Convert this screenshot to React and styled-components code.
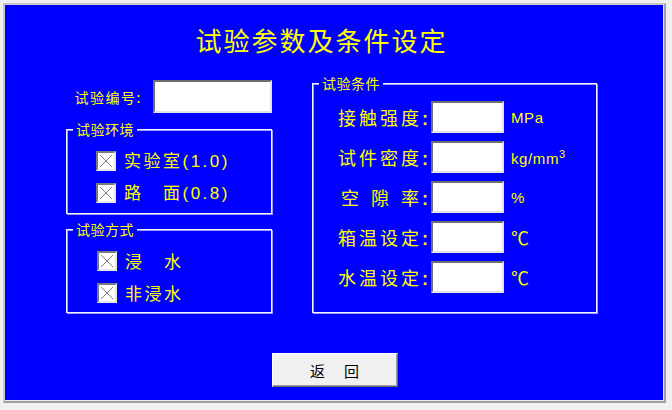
import styled, { createGlobalStyle } from "styled-components";

const GlobalStyle = createGlobalStyle`
  html, body {
    margin: 0;
    padding: 0;
    background: #f0f0f0;
  }
  body {
    font-family: "Noto Sans CJK SC", "Liberation Sans", sans-serif;
  }
`;

const Frame = styled.div`
  box-sizing: border-box;
  margin: 3px 0 0 3px;
  width: 663px;
  height: 400px;
  background: #0000ff;
  border-top: 2px solid #c8c8c8;
  border-left: 2px solid #c8c8c8;
  border-right: 2px solid #a0a0a0;
  border-bottom: 2px solid #a0a0a0;
  box-shadow: inset -1px -1px 0 #e8e8e8;
  display: flex;
  flex-direction: column;
`;

const Title = styled.h1`
  margin: 20px 0 0 0;
  height: 30px;
  line-height: 30px;
  text-align: center;
  font-size: 26px;
  font-weight: 400;
  letter-spacing: 2px;
  color: #ffff00;
  padding-right: 26px;
`;

const Body = styled.div`
  display: flex;
  gap: 40px;
  margin-top: 25px;
  padding-left: 61px;
`;

const LeftCol = styled.div`
  width: 206px;
  display: flex;
  flex-direction: column;
`;

const IdRow = styled.div`
  height: 33px;
  display: flex;
  align-items: center;
  justify-content: flex-end;
  gap: 11px;
`;

const SmallLabel = styled.span`
  font-size: 14px;
  color: #ffff00;
  letter-spacing: 1.5px;
`;

const Field = styled.div`
  box-sizing: border-box;
  width: ${(p) => p.$w}px;
  height: ${(p) => p.$h}px;
  background: #ffffff;
  border-top: 2px solid #6e6e6e;
  border-left: 2px solid #6e6e6e;
  border-right: 2px solid #e2e2e2;
  border-bottom: 2px solid #e2e2e2;
`;

const Group = styled.div`
  position: relative;
  box-sizing: border-box;
  width: ${(p) => p.$w}px;
  height: ${(p) => p.$h}px;
  margin-top: ${(p) => p.$mt}px;
  border: 1px solid #f4f4ff;
  box-shadow: inset 1px 1px 0 #9a9aff, 1px 1px 0 #9a9aff;
  padding: ${(p) => p.$pad};
  display: flex;
  flex-direction: column;
  gap: ${(p) => p.$gap}px;
`;

const Legend = styled.span`
  position: absolute;
  top: -10px;
  left: 6px;
  padding: 0 3px;
  background: #0000ff;
  font-size: 14px;
  line-height: 18px;
  letter-spacing: 0.5px;
  color: #ffff00;
`;

const CheckRow = styled.label`
  display: flex;
  align-items: center;
  gap: 8px;
  height: 20px;
`;

const Box = styled.span`
  box-sizing: border-box;
  width: 20px;
  height: 20px;
  background: #ffffff;
  border-top: 2px solid #7a7a7a;
  border-left: 2px solid #7a7a7a;
  border-right: 2px solid #e6e6e6;
  border-bottom: 2px solid #e6e6e6;
  display: flex;
  align-items: center;
  justify-content: center;
`;

const CheckText = styled.span`
  font-size: 17px;
  line-height: 20px;
  letter-spacing: 2.5px;
  color: #ffff00;
  white-space: pre;
`;

const Num = styled.span`
  font-family: "Liberation Sans", sans-serif;
  letter-spacing: 2.5px;
`;

const ParamRow = styled.div`
  display: grid;
  grid-template-columns: 94px 73px auto;
  column-gap: 3px;
  align-items: center;
  height: 32px;
`;

const ParamLabel = styled.span`
  font-size: 18px;
  letter-spacing: 3px;
  color: #ffff00;
  text-align: right;
  white-space: nowrap;
`;

const Spread = styled.span`
  letter-spacing: 12px;
`;

const Colon = styled.span`
  font-family: "Liberation Sans", sans-serif;
  font-size: 18px;
  font-weight: 700;
  letter-spacing: 0;
`;

const Unit = styled.span`
  margin-left: 4px;
  font-family: ${(p) => (p.$cjk ? '"Noto Sans CJK SC", sans-serif' : '"Liberation Sans", sans-serif')};
  font-size: ${(p) => (p.$cjk ? 18 : 15)}px;
  letter-spacing: ${(p) => (p.$cjk ? 0 : 0.6)}px;
  color: #ffff00;
  sup {
    font-size: 11px;
    vertical-align: 6px;
  }
`;

const Footer = styled.div`
  display: flex;
  justify-content: center;
  margin-top: 40px;
`;

const Button = styled.button`
  box-sizing: border-box;
  width: 126px;
  height: 34px;
  background: #f0f0f0;
  border-top: 1px solid #ffffff;
  border-left: 1px solid #ffffff;
  border-right: 1px solid #696969;
  border-bottom: 1px solid #696969;
  box-shadow: inset -1px -1px 0 #a0a0a0;
  font-family: "Noto Sans CJK SC", sans-serif;
  font-size: 15px;
  letter-spacing: 2px;
  color: #000000;
  padding: 0 0 0 2px;
`;

const Check = () => (
  <Box>
    <svg width="14" height="14" viewBox="0 0 14 14">
      <path d="M1 1 L13 13 M13 1 L1 13" stroke="#808080" strokeWidth="1" fill="none" />
    </svg>
  </Box>
);

const params = [
  { label: "接触强度", unit: "MPa" },
  { label: "试件密度", unit: "kg/mm", sup: "3" },
  { label: "空隙率", unit: "%", spread: true },
  { label: "箱温设定", unit: "℃", cjk: true },
  { label: "水温设定", unit: "℃", cjk: true },
];

export default function App() {
  return (
    <>
      <GlobalStyle />
      <Frame>
        <Title>试验参数及条件设定</Title>
        <Body>
          <LeftCol>
            <IdRow>
              <SmallLabel>试验编号:</SmallLabel>
              <Field $w={119} $h={33} />
            </IdRow>
            <Group $w={206} $h={85} $mt={16} $pad="21px 0 0 29px" $gap={12}>
              <Legend>试验环境</Legend>
              <CheckRow>
                <Check />
                <CheckText>
                  实验室<Num>(1.0)</Num>
                </CheckText>
              </CheckRow>
              <CheckRow>
                <Check />
                <CheckText>
                  路　面<Num>(0.8)</Num>
                </CheckText>
              </CheckRow>
            </Group>
            <Group $w={206} $h={84} $mt={15} $pad="21px 0 0 30px" $gap={12}>
              <Legend>试验方式</Legend>
              <CheckRow>
                <Check />
                <CheckText>浸　水</CheckText>
              </CheckRow>
              <CheckRow>
                <Check />
                <CheckText>非浸水</CheckText>
              </CheckRow>
            </Group>
          </LeftCol>
          <Group $w={285} $h={230} $mt={3} $pad="17px 0 0 21px" $gap={8}>
            <Legend>试验条件</Legend>
            {params.map((p) => (
              <ParamRow key={p.label}>
                <ParamLabel>
                  {p.spread ? (
                    <>
                      <Spread>空隙</Spread>率
                    </>
                  ) : (
                    p.label
                  )}
                  <Colon>:</Colon>
                </ParamLabel>
                <Field $w={73} $h={32} />
                <Unit $cjk={p.cjk}>
                  {p.unit}
                  {p.sup && <sup>{p.sup}</sup>}
                </Unit>
              </ParamRow>
            ))}
          </Group>
        </Body>
        <Footer>
          <Button>返　回</Button>
        </Footer>
      </Frame>
    </>
  );
}
